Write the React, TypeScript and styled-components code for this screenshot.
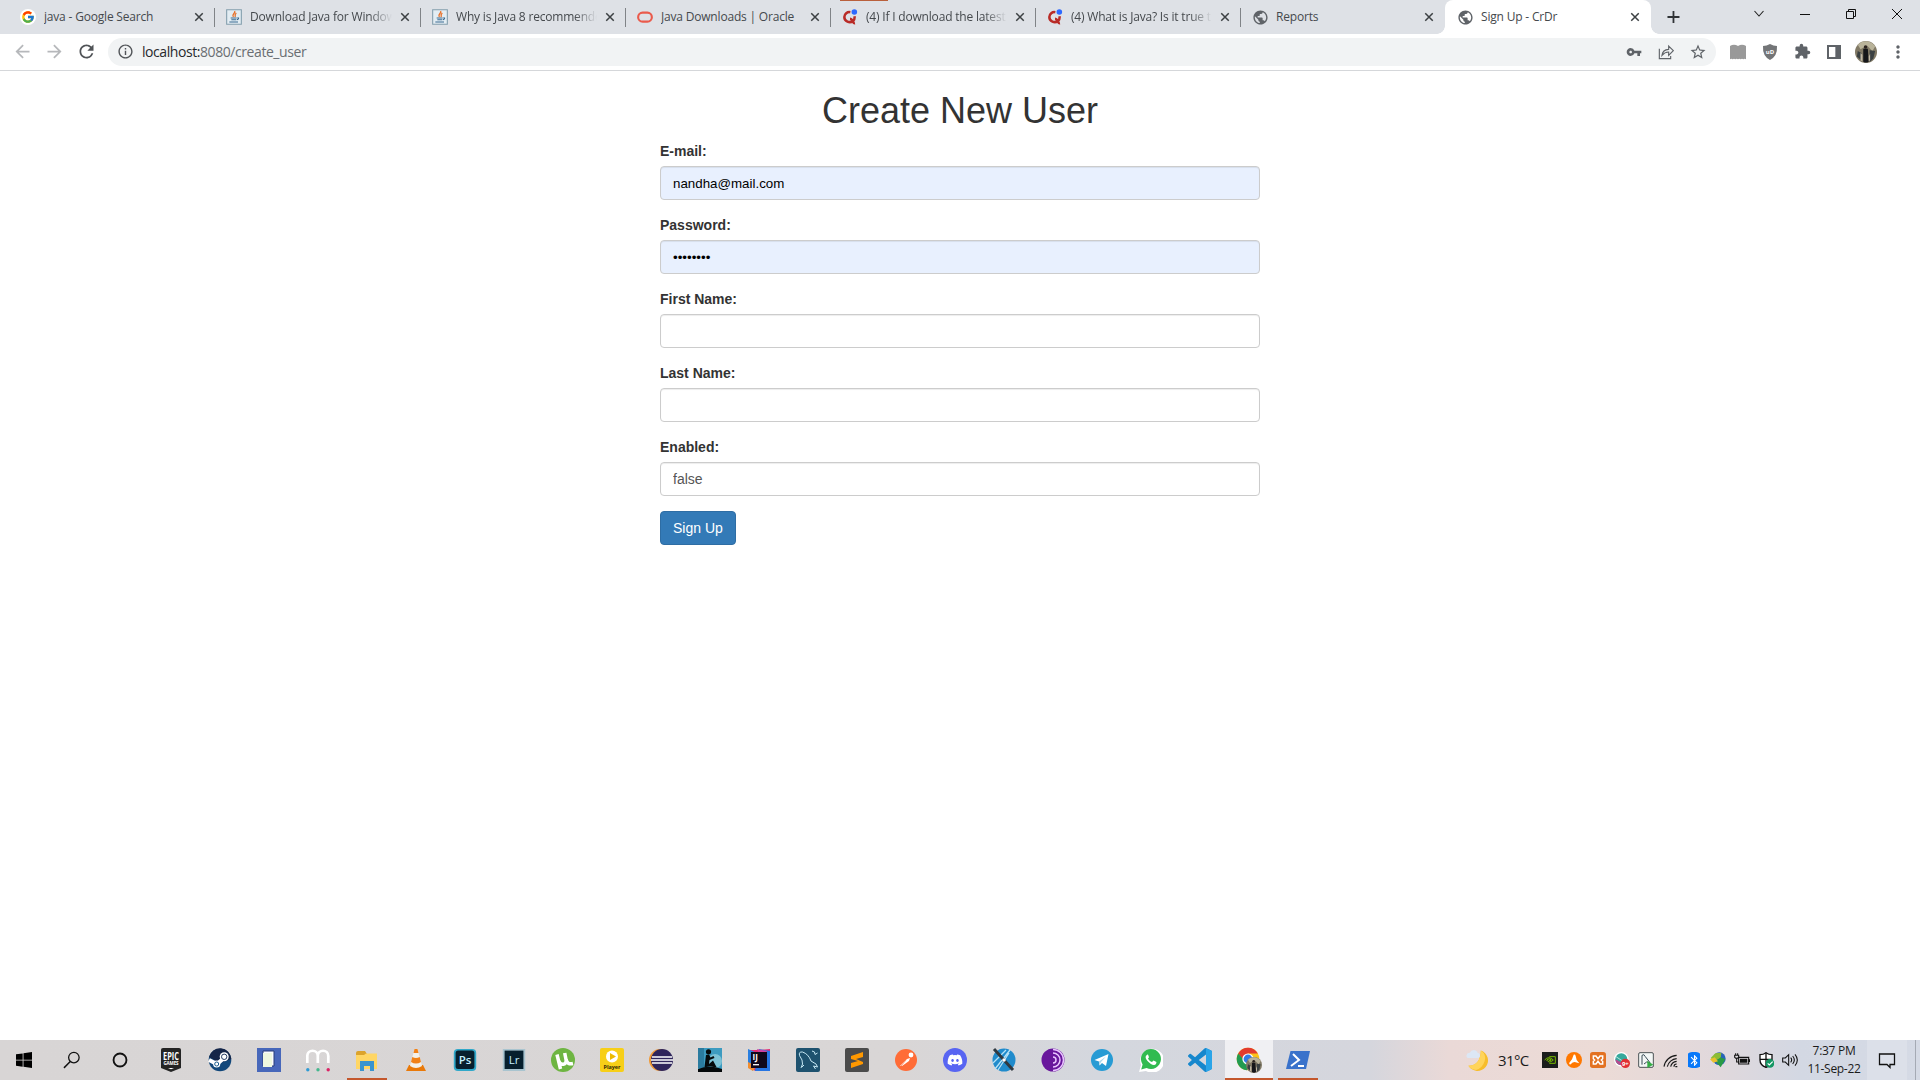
import React from 'react';
import styled, { createGlobalStyle } from 'styled-components';
import { MdPublic, MdVpnKey, MdStarBorder, MdExtension, MdRefresh, MdArrowBack, MdArrowForward, MdOutlineInfo, MdBluetooth, MdMoreVert } from 'react-icons/md';
import { FcGoogle } from 'react-icons/fc';
import { FaDiscord, FaWhatsapp } from 'react-icons/fa';

const Global = createGlobalStyle`
  *{box-sizing:border-box}
  body{margin:0;background:#fff;overflow:hidden;font-family:"Liberation Sans",sans-serif}
  svg{display:block;flex:none}
  svg text{font-family:"Open Sans",sans-serif}
`;
const Screen = styled.div`
  width:1920px;height:1080px;display:flex;flex-direction:column;background:#fff;
`;
const TabStrip = styled.div`
  height:34px;background:#dee1e6;display:flex;align-items:stretch;padding-left:10px;position:relative;
`;
const LoadingMark = styled.div`
  position:absolute;left:840px;top:0;width:48px;height:1px;background:#b9603c;
`;
const Tab = styled.div<{ $w: number; $active?: boolean; $divider?: boolean; $pad?: number }>`
  width:${p => p.$w}px;display:flex;align-items:center;padding:0 11px 0 ${p => p.$pad ?? 11}px;gap:8px;position:relative;
  background:${p => (p.$active ? '#fff' : 'transparent')};
  border-radius:${p => (p.$active ? '8px 8px 0 0' : '0')};
  &::after{content:"";position:absolute;right:0;top:8px;width:1px;height:19px;background:${p => (p.$divider ? '#808387' : 'transparent')}}
  ${p => p.$active && `
    &::before,&::after{content:"";position:absolute;top:auto;bottom:0;width:8px;height:8px}
    &::before{left:-8px;background:radial-gradient(circle at 0 0,transparent 7.5px,#fff 8px)}
    &::after{right:-8px;background:radial-gradient(circle at 100% 0,transparent 7.5px,#fff 8px)}
  `}
`;
const TabIcon = styled.span`
  width:16px;height:16px;display:grid;place-items:center;flex:none;color:#5f6368;
`;
const GoogleDisc = styled.span`
  width:16px;height:16px;border-radius:50%;background:#fff;display:grid;place-items:center;
`;
const TabTitle = styled.span<{ $fade?: boolean }>`
  flex:1;min-width:0;overflow:hidden;white-space:nowrap;font:12px/18px "Open Sans",sans-serif;color:#45494d;
  letter-spacing:-.19px;
  ${p => p.$fade && 'mask-image:linear-gradient(90deg,#000 84%,transparent 100%);'}
`;
const NewTab = styled.div`
  width:46px;display:grid;place-items:center;
`;
const WindowButtons = styled.div`
  display:flex;margin-left:auto;width:184px;height:28px;align-items:center;
  & > div{width:46px;display:grid;place-items:center}
`;
const Toolbar = styled.div`
  height:37px;border-bottom:1px solid #d5d7da;display:flex;align-items:center;padding:0 6px 1px;
`;
const IconRow = styled.div<{ $color?: string }>`
  display:flex;flex:none;color:${p => p.$color ?? '#5f6368'};
`;
const IconCell = styled.div<{ $color?: string }>`
  width:32px;height:28px;display:grid;place-items:center;color:${p => p.$color ?? 'inherit'};
`;
const Address = styled.div`
  flex:none;width:1608px;height:28px;border-radius:14px;background:#f1f3f4;display:flex;align-items:center;margin:0 6px;
  padding:0 2px 0 9px;color:#515458;
`;
const Url = styled.span`
  flex:1;margin-left:8px;font:14px/20px "Open Sans",sans-serif;color:#6a6e72;letter-spacing:-.43px;
  b{font-weight:400;color:#27292c}
`;
const Page = styled.main`
  flex:1;display:flex;flex-direction:column;align-items:center;
`;
const Form = styled.form`
  width:600px;display:flex;flex-direction:column;
`;
const Title = styled.h1`
  margin:20px 0 11px;text-align:center;font-size:36px;line-height:39px;color:#333;font-weight:400;
`;
const Group = styled.div`
  display:flex;flex-direction:column;margin-bottom:15px;
`;
const Label = styled.label`
  font-size:14px;line-height:20px;font-weight:700;color:#333;margin-bottom:5px;
`;
const Input = styled.input<{ $filled?: boolean }>`
  height:34px;border:1px solid #ccc;border-radius:4px;padding:6px 12px;outline:none;
  font:${p => (p.$filled ? '13.333px' : '14px')}/20px "Liberation Sans",sans-serif;
  color:${p => (p.$filled ? '#000' : '#555')};background:${p => (p.$filled ? '#e8f0fe' : '#fff')};
  box-shadow:inset 0 1px 1px rgba(0,0,0,.075);
`;
const Submit = styled.button`
  align-self:flex-start;height:34px;padding:6px 12px;border:1px solid #2e6da4;border-radius:4px;background:#337ab7;color:#fff;
  font:14px/20px "Liberation Sans",sans-serif;
`;
const Taskbar = styled.footer`
  height:40px;display:flex;align-items:stretch;
  background:linear-gradient(90deg,#d8d5d5 0,#d9d6d6 900px,#d4d7de 1100px,#d5d6dd 1370px,#ead9d7 1450px,#ecdbd6 1600px,#e0d8dc 1720px,#d3d8e3 1800px,#d5dae5 1920px);
`;
const SystemItem = styled.div`
  width:48px;display:grid;place-items:center;
`;
const Apps = styled.div`
  display:flex;gap:1px;margin-left:3px;
`;
const AppCell = styled.div<{ $open?: boolean; $active?: boolean }>`
  width:48px;display:grid;place-items:center;position:relative;background:${p => (p.$active ? '#f0f0f3' : 'transparent')};
  &::after{content:"";position:absolute;bottom:0;height:2px;left:${p => (p.$active ? 0 : 4)}px;right:${p => (p.$active ? 0 : 4)}px;
    background:${p => (p.$open || p.$active ? '#c4572c' : 'transparent')}}
`;
const Disc = styled.span<{ $bg: string }>`
  width:24px;height:24px;border-radius:50%;background:${p => p.$bg};display:grid;place-items:center;color:#fff;
`;
const Tray = styled.div`
  display:flex;align-items:center;margin-left:auto;font:15px/20px "Open Sans",sans-serif;color:#1b1b1b;
`;
const Weather = styled.div`
  display:flex;align-items:center;gap:9px;width:76px;letter-spacing:-.6px;white-space:nowrap;
`;
const TrayIcons = styled.div`
  display:flex;gap:8px;width:256px;
`;
const BluetoothBadge = styled.span`
  width:16px;height:16px;display:grid;place-items:center;color:#fff;
  background:linear-gradient(#0878f9,#0878f9) center/12px 16px no-repeat;border-radius:6px;
`;
const Clock = styled.div`
  width:66px;margin-left:3px;font-size:12px;line-height:18px;text-align:center;letter-spacing:-.3px;white-space:nowrap;
`;
const Notifications = styled.div`
  width:40px;height:40px;display:grid;place-items:center;background:#dce0e9;
`;
const ShowDesktop = styled.div`
  width:5px;height:40px;margin-left:8px;border-left:1px solid #a5aab4;
`;

type ArtProps = { s?: number; children: React.ReactNode };
const Art = ({ s = 24, children }: ArtProps) => <svg width={s} height={s} viewBox="0 0 24 24" fill="none">{children}</svg>;

const Google = () => <GoogleDisc><FcGoogle size={14} /></GoogleDisc>;
const Java = () => (
  <Art s={16}><path d="M1 1h22v22H1z" fill="#e3edf3" stroke="#829dac" strokeWidth="1.6" /><path d="M13 3c2 4-5 4-2 9M15.5 6c-3 2-2 4-1.5 6" stroke="#e76f28" strokeWidth="2" /><path d="M7 13.5h9M8 16.2h7M5 19.5h13M17 13c4 0 1 3-1 3" stroke="#3b6b92" strokeWidth="1.6" /></Art>
);
const Oracle = () => <Art s={16}><rect x="1.7" y="5.5" width="20.6" height="13.5" rx="6.7" stroke="#ea5b4c" strokeWidth="3.2" /></Art>;
const Quora = () => <Art s={16}><path d="M12.5 4.8A7.6 7.6 0 0 0 3.5 12c0 7 8 9.500 13 6.200 2-1.500 2.600-4 2.600-7.200M12 14.500c4.500 0 3.500 7.500 7.500 6.700" stroke="#b92b27" strokeWidth="3.800" /><circle cx="18.5" cy="4.5" r="4.2" fill="#2e69ff" /></Art>;
const Globe = () => <MdPublic size={17} />;
const Close = () => <Art s={10}><path d="m3 3 18 18M21 3 3 21" stroke="#3c4043" strokeWidth="3.6" /></Art>;

const tabs = [
  { w: 205, pad: 10, icon: <Google />, title: 'java - Google Search', divider: true },
  { w: 206, icon: <Java />, title: 'Download Java for Window', divider: true, fade: true },
  { w: 205, icon: <Java />, title: 'Why is Java 8 recommende', divider: true, fade: true },
  { w: 205, icon: <Oracle />, title: 'Java Downloads | Oracle', divider: true },
  { w: 205, icon: <Quora />, title: '(4) If I download the latest', divider: true, fade: true },
  { w: 205, icon: <Quora />, title: '(4) What is Java? Is it true t', divider: true, fade: true },
  { w: 204, icon: <Globe />, title: 'Reports' },
  { w: 206, pad: 12, icon: <Globe />, title: 'Sign Up - CrDr', active: true },
];

const Start = () => <Art s={16}><path d="m0 3.5 10-1.4v9.4H0zM11.2 2 24 0v11.5H11.2zM0 12.7h10v9.4L0 20.6zM11.2 12.7H24V24l-12.8-1.9z" fill="#000" /></Art>;
const Search = () => <Art s={18}><circle cx="14.5" cy="8.8" r="7" stroke="#111" strokeWidth="1.7" /><path d="m9.7 14-8.4 8.5" stroke="#111" strokeWidth="1.9" /></Art>;
const Cortana = () => <Art s={16}><circle cx="12" cy="12" r="9.7" stroke="#111" strokeWidth="2.8" /></Art>;
const Epic = () => <Art><path d="M2 1.5Q2 0 4 0h16q2 0 2 2v18l-10 4-10-4z" fill="#242424" /><text x="12" y="11.5" textAnchor="middle" fontSize="10" fontWeight="700" fill="#fff" textLength="16" lengthAdjust="spacingAndGlyphs">EPIC</text><text x="12" y="17" textAnchor="middle" fontSize="4.5" fontWeight="700" fill="#fff" textLength="15">GAMES</text><path d="m9 20 3 1.3 3-1.3z" fill="#fff" /></Art>;
const Steam = () => <Art><circle cx="12" cy="12" r="11.3" fill="#12477a" /><path d="M1 9A11.3 11.3 0 0 1 23.3 11L12 15z" fill="#152548" /><path d="m1 12 8 4 7-6" stroke="#fff" strokeWidth="4" /><circle cx="16.2" cy="8.8" r="4.5" fill="#fff" /><circle cx="16.2" cy="8.8" r="2.7" stroke="#263b62" strokeWidth="1" /><circle cx="8.7" cy="16" r="3.6" fill="#fff" /><circle cx="8.7" cy="16" r="2" stroke="#17598b" /></Art>;
const Notebook = () => <Art><path d="M0 0h24v24H0z" fill="#4767ba" /><path d="M6 3h11v15H6z" fill="#f8fbff" stroke="#263d78" /><path d="M6 5h9v14H6z" fill="#eef8df" /></Art>;
const Meem = () => <Art><path d="M1.3 15V8a5.2 5.2 0 0 1 10.5 0v7M11.8 8a5.2 5.2 0 0 1 10.5 0v7" stroke="#fff" strokeWidth="2.7" /><circle cx="1.8" cy="21.8" r="1.7" fill="#2e9bd4" /><circle cx="12" cy="21.8" r="1.7" fill="#45b78e" /><circle cx="22.2" cy="21.8" r="1.7" fill="#dc2365" /></Art>;
const Folder = () => <Art><path d="M1 5q0-2 2-2h7l2 3h10v15H1z" fill="#dca32c" /><path d="M1 7h8l2-1.500h11v15.500H1z" fill="#ffd665" /><path d="M5 13h14v10h-4v-5H9v5H5z" fill="#3a94cf" /></Art>;
const Vlc = () => <Art><path d="m5 17-3 6h20l-3-6z" fill="#e97909" /><path d="M10.500 1 6 18q6 4 12 0L13.500 1z" fill="#f4f1e9" /><path d="m10.500 1-1 4h5l-1-4zM8.300 9l-1.300 5q5 3 10 0l-1.300-5q-3.700 2-7.400 0" fill="#f18117" /></Art>;
const Adobe = ({ name, old }: { name: string; old?: boolean }) => <Art><rect x=".8" y="1" width="22.4" height="22" rx={old ? 0 : 4} fill={old ? '#a9c4cf' : '#31a8c9'} /><rect x="2.6" y="2.6" width="18.8" height="18.4" rx={old ? 0 : 2.5} fill="#071f2d" /><text x="12" y="16" textAnchor="middle" fontSize="11.5" fontWeight={old ? 400 : 600} fill="#c5f0ff">{name}</text></Art>;
const Torrent = () => <Art><circle cx="12" cy="12" r="12" fill="#6eb542" /><path d="M6 6.500 9.500 21M7.800 13c1.500 5 8.500 4 7.200-1.500L13.700 5M15 11.500c.8 3.500 3 5 7 4" stroke="#fff" strokeWidth="3.500" /></Art>;
const Player = () => <Art><rect width="24" height="24" rx="2" fill="#f7cf18" /><circle cx="12" cy="8.5" r="6" fill="#fff" /><path d="m10 5 6 3.5-6 3.5z" fill="#edba00" /><text x="12" y="21" textAnchor="middle" fontSize="6" fontWeight="700" fill="#342c08" textLength="17" lengthAdjust="spacingAndGlyphs">Player</text></Art>;
const Eclipse = () => <Art><circle cx="11" cy="12" r="11" fill="#f19a36" /><circle cx="13" cy="12" r="11" fill="#2f255b" /><path d="M3 9h20M2 12h22M3 15h20" stroke="#fff" strokeWidth="1.5" /></Art>;
const Kindle = () => <Art><path d="M0 0h24v24H0z" fill="#3d9bc0" /><path d="M0 0h6v20H0z" fill="#2b7b9f" /><circle cx="17" cy="13" r="7" fill="#a9dce5" opacity=".6" /><circle cx="10.500" cy="3.800" r="2.6" fill="#05090b" /><path d="M8 7 6.500 19h12L15 12.500l-4 3.500.5-4 5-2-1-2-3 1.500L11 6.500zM0 21q12-5 24 0v3H0z" fill="#05090b" /></Art>;
const Idea = () => <Art><path d="m1 2 11 0 11-1v22H8L1 16z" fill="#e22e75" /><path d="m1 1 9 4-4 18L1 16z" fill="#2a7fe0" /><path d="m1 14 8 4-3 5-5-3z" fill="#f38d2d" /><path d="m12 1 11 2v20L8 23z" fill="#2675e3" /><path d="m10 1 10 2-6 8z" fill="#d33fa0" /><path d="M4 4h16v16H4z" fill="#10081a" /><text x="5.6" y="12" fontSize="8" fontWeight="700" fill="#fff">IJ</text><path d="M6 16.7h6" stroke="#fff" strokeWidth="1.3" /></Art>;
const Sql = () => <Art><rect width="24" height="24" rx="2" fill="#1e526f" /><path d="M5 20 6.500 16 6 12 3.500 7.500q-1-4 3-3.500 6 2 8.500 9l5 3 1.500 3-4-1 2 3M6 19l2-2M16 3l2.500 1 .5 2.500L21.500 5" stroke="#c6e8f4" strokeWidth="1" /></Art>;
const Sublime = () => <Art><rect width="24" height="24" rx="2" fill="#4b4b4b" /><path d="m6 8 12-4v5l-7 2 7 3v2L6 20v-5l7-2-7-2z" fill="#ff9800" /></Art>;
const Postman = () => <Art><circle cx="12" cy="12" r="11" fill="#ff6c37" /><path d="m6 18 7-7 3-1-1 3-7 5z" fill="#fff" /><circle cx="17" cy="7" r="2.4" fill="#fff" /><path d="m12 12-5 6" stroke="#ff9a76" /></Art>;
const Discord = () => <Disc $bg="#5865f2"><FaDiscord size={16} /></Disc>;
const Scope = () => <Art><circle cx="12" cy="12" r="11.5" fill="#208bcc" /><path d="m1 15 13-13M3 21 18 2M6 22 17 5" stroke="#b7e2f6" strokeWidth="1.3" /><path d="m2 1 19 21" stroke="#303941" strokeWidth="3" /><circle cx="12" cy="12" r="1.8" fill="#fff" /></Art>;
const Tor = () => <Art><circle cx="12" cy="12" r="11.5" fill="#68169c" /><path d="M12 5a7 7 0 0 1 0 14M12 1.5a10.5 10.5 0 0 1 0 21M12 9a3 3 0 0 1 0 6" stroke="#e9c4ff" strokeWidth="1.5" /></Art>;
const Telegram = () => <Art><circle cx="12" cy="12" r="11" fill="#279bd4" /><path d="m4.5 12 14-6-2.5 12-4-3-2.5 2.5-.5-4z" fill="#fff" /><path d="m9 13.5 7-5-5 5.5-1.5 3z" fill="#aad5ea" /></Art>;
const WhatsApp = () => <Art><path d="m0 24 2-7A12 12 0 1 1 7 23z" fill="#fff" /><path d="m2.2 21.5 1.4-5A10 10 0 1 1 7.6 20z" fill="#31bb50" /><path d="M8.500 6.500c-3 1.500-2 4.500.5 7s6 5 8 2.500l.5-2-3-1.400-1.500 1.500c-2-.5-3-2-4-3.600l1-1.300-1-2.700z" fill="#fff" /></Art>;
const Code = () => <Art><path d="M23.15 2.587L18.21.21a1.494 1.494 0 0 0-1.705.29l-9.46 8.63-4.12-3.128a.999.999 0 0 0-1.276.057L.327 7.261A1 1 0 0 0 .326 8.74L3.899 12 .326 15.26a1 1 0 0 0 .001 1.479L1.65 17.94a.999.999 0 0 0 1.276.057l4.12-3.128 9.46 8.63a1.492 1.492 0 0 0 1.704.29l4.942-2.377A1.5 1.5 0 0 0 24 20.06V3.939a1.5 1.5 0 0 0-.85-1.352zm-5.146 14.861L10.826 12l7.178-5.448v10.896z" fill="#1687cd" /><path d="m18 .1 5.150 2.487A1.500 1.500 0 0 1 24 3.939V20.060q0 1-.85 1.350L18 23.900z" fill="#2aa4e8" /></Art>;
const Avatar = ({ s = 22 }: { s?: number }) => <Art s={s}><circle cx="12" cy="12" r="12" fill="#817965" /><path d="M3 4A12 12 0 0 1 22 6l-3 5-6-6-7 4z" fill="#b9b39a" /><circle cx="11.500" cy="6.500" r="1.900" fill="#2a221f" /><path d="M9 8.500h5l1 14q-3 2-6 0z" fill="#151619" /><path d="m16 10 6 1-2 8-4 4zM3 11l4 2v8l-5-4z" fill="#3b4142" /><path d="m6 13 2 2v7l-2-1zm9 4 1.500-3v7L15 22z" fill="#c2b9a6" /></Art>;
const Chrome = () => (
  <svg width="26" height="26" viewBox="0 0 26 26"><circle cx="12" cy="12" r="11.3" fill="#fbc318" /><path d="M2.2 6.4A11.3 11.3 0 0 1 21.8 6.4H12L8 14z" fill="#e33b2e" /><path d="M2.2 6.4A11.3 11.3 0 0 0 11 23.3l6-8-8-1z" fill="#229b50" /><circle cx="12" cy="12" r="5.6" fill="#fff" /><circle cx="12" cy="12" r="4.4" fill="#337be5" /><g transform="translate(10 10)"><Avatar s={16} /></g></svg>
);
const Powershell = () => <Art><path d="M4.5 3H24l-4 18H0z" fill="#3972cb" /><path d="m7 6 6 6-8 6m7 0h6" stroke="#fff" strokeWidth="2" /></Art>;

const apps = [Epic, Steam, Notebook, Meem, Folder, Vlc, () => <Adobe name="Ps" />, () => <Adobe name="Lr" old />, Torrent, Player, Eclipse, Kindle, Idea, Sql, Sublime, Postman, Discord, Scope, Tor, Telegram, WhatsApp, Code, Chrome, Powershell];

const trayStart = [
  <><path d="M0 0h24v24H0z" fill="#1b1d1c" /><path d="M4 12q6-7 13 0-6 6-10 0 4-4 7 0-2 2-4 0M11 7h9v10h-9" stroke="#76b900" strokeWidth="1.5" /></>,
  <><circle cx="12" cy="12" r="12" fill="#ff7800" /><path d="M11.500 4q2.500-.5 3 2l1.500 6 4 5-7-2q-3 0-6 3.500-3 .5-2-2.500l4-5z" fill="#fff" /></>,
  <><rect width="24" height="24" rx="4" fill="#e37222" /><path d="M5 6h4l3 4 3-4h4v4l-2 2 2 2v4h-4l-3-4-3 4H5v-4l2-2-2-2z" stroke="#fff" strokeWidth="2.2" /></>,
  <><circle cx="11" cy="11" r="11" fill="#fff" /><circle cx="11" cy="11" r="9" fill="#36a99c" /><path d="M2 11a9 9 0 0 0 14 7z" fill="#b74a8f" /><path d="M3 7 15 15l5-4" stroke="#fff" /><circle cx="17" cy="17" r="7" fill="#e13035" /><text x="17" y="20.500" fontSize="9" fontWeight="700" textAnchor="middle" fill="#fff">9+</text></>,
  <><rect x="1" y="1" width="22" height="22" rx="2" fill="#f3f7f6" stroke="#4c5356" strokeWidth="1.5" /><path d="M6 19V5q3-3 5 2l7 9-5-1-4 3" stroke="#384b55" strokeWidth="1.5" /><path d="m14 13 9 6-9 5z" fill="#35ad45" /></>,
  <path d="M3 22A20 20 0 0 1 22 5M8 22A15 15 0 0 1 22 10M13 22a10 10 0 0 1 9-8M18 22q0-4 4-4M20 22h3" stroke="#191919" strokeWidth="1.7" />,
];
const trayEnd = [
  <><circle cx="14" cy="10" r="9.500" fill="#2864b8" /><path d="m8 2 9-1-1 9-10 3-5-4z" fill="#8dbd35" /><path d="m16 8 7 3-7 12-8-9z" fill="#299a45" /><path d="m0 11 7-3 5 6-7 2z" fill="#e9bf2e" /></>,
  <><path d="M7 8h15v10H7z" stroke="#111" strokeWidth="1.7" /><path d="M9 10h11v6H9zM22 11h2v4h-2z" fill="#111" /><path d="M1 5h6v3q-3 3-6 0zM4 10v5h4M2.500 2v3m3-3v3" stroke="#111" strokeWidth="1.6" /></>,
  <><path d="M12 1q4 3 9 3v8q0 8-9 11-9-3-9-11V4q5 0 9-3z" fill="#fff" stroke="#111" strokeWidth="2" /><path d="M12 1v22M3 11h18" stroke="#111" strokeWidth="2" /><circle cx="18" cy="17" r="6.500" fill="#139763" /><path d="m14.5 17 2.5 2.5 5-5" stroke="#fff" strokeWidth="1.7" /></>,
  <path d="M1 9h4l5-5v16l-5-5H1zM13 8.500q3 3.500 0 7M16 6q5 6 0 12M19.500 3.500q7 8.500 0 17" stroke="#111" strokeWidth="1.6" />,
];

export default function App() {
  return (
    <Screen>
      <Global />
      <TabStrip>
        <LoadingMark />
        {tabs.map((t, i) => (
          <Tab key={i} $w={t.w} $pad={t.pad} $active={t.active} $divider={t.divider}>
            <TabIcon>{t.icon}</TabIcon><TabTitle $fade={t.fade}>{t.title}</TabTitle><Close />
          </Tab>
        ))}
        <NewTab><Art s={18}><path d="M11.300 4v16M3.300 12h16" stroke="#303336" strokeWidth="2.4" /></Art></NewTab>
        <WindowButtons>
          <div><Art s={12}><path d="m3 6 9 10 9-10" stroke="#222" strokeWidth="2.2" /></Art></div>
          <div><Art s={12}><path d="M2 13h20" stroke="#111" strokeWidth="2" /></Art></div>
          <div><Art s={12}><path d="M3 7h14v14H3zM7 7V3h14v14h-4" stroke="#111" strokeWidth="2" /></Art></div>
          <div><Art s={12}><path d="m2 2 20 20M22 2 2 22" stroke="#111" strokeWidth="2" /></Art></div>
        </WindowButtons>
      </TabStrip>
      <Toolbar>
        <IconRow>
          <IconCell $color="#b6b8bb"><MdArrowBack size={21} /></IconCell>
          <IconCell $color="#b6b8bb"><MdArrowForward size={21} /></IconCell>
          <IconCell $color="#505357"><MdRefresh size={21} /></IconCell>
        </IconRow>
        <Address>
          <MdOutlineInfo size={17} />
          <Url><b>localhost:</b>8080/create_user</Url>
          <IconRow>
            <IconCell><MdVpnKey size={16} /></IconCell>
            <IconCell><Art s={16}><path d="M2 7v15h17v-4M6 17q1-8.500 10-9V3l7 7-7 7v-5q-6 0-10 5z" stroke="#5f6368" strokeWidth="1.7" /></Art></IconCell>
            <IconCell><MdStarBorder size={18} /></IconCell>
          </IconRow>
        </Address>
        <IconRow>
          <IconCell><Art s={16}><path d="M0 3q6-4 12 0 6-4 12 0v20q-2-2-4 0-2-2-4 0-2-2-4 0-2-2-4 0-2-2-4 0-2-2-4 0z" fill="#999" /></Art></IconCell>
          <IconCell><Art s={16}><path d="M12 0q5 3 10.500 3 1 15-10.500 21Q.5 18 1.500 3 7 3 12 0" fill="#737577" /><text x="12" y="14.500" textAnchor="middle" fontSize="9" fontWeight="700" fill="#fff">uD</text></Art></IconCell>
          <IconCell><MdExtension size={17} /></IconCell>
          <IconCell><Art s={16}><path d="M3 3h18v18H3z" stroke="#5f6368" strokeWidth="3" /><path d="M14 3h8v18h-8z" fill="#5f6368" /></Art></IconCell>
          <IconCell><Avatar /></IconCell>
          <IconCell><MdMoreVert size={20} /></IconCell>
        </IconRow>
      </Toolbar>
      <Page>
        <Form>
          <Title>Create New User</Title>
          <Group><Label>E-mail:</Label><Input $filled defaultValue="nandha@mail.com" /></Group>
          <Group><Label>Password:</Label><Input $filled type="password" defaultValue="password" /></Group>
          <Group><Label>First Name:</Label><Input /></Group>
          <Group><Label>Last Name:</Label><Input /></Group>
          <Group><Label>Enabled:</Label><Input defaultValue="false" /></Group>
          <Submit type="button">Sign Up</Submit>
        </Form>
      </Page>
      <Taskbar>
        <SystemItem><Start /></SystemItem><SystemItem><Search /></SystemItem><SystemItem><Cortana /></SystemItem>
        <Apps>{apps.map((Icon, i) => <AppCell key={i} $open={i === 4 || i === 23} $active={i === 22}><Icon /></AppCell>)}</Apps>
        <Tray>
          <Weather>
            <Art s={23}><path d="M15.500 1.500a11 11 0 1 1-13 16Q15 17 15.500 1.500" fill="#f7bd2b" /><path d="M15.500 1.500q6 4 4 11t-9 9.500q-5-.5-8-4.500Q15 17 15.500 1.500" fill="#ffd45a" /><path d="M3.500 9.500Q0 9.500.5 6.500 1 4 4 4q2-4 6-2.500 2 1 2 2.500 3 1 2.500 3.500-.5 2-3 2z" fill="#dce7f5" /></Art>
            <span>31°C</span>
          </Weather>
          <TrayIcons>
            {trayStart.map((icon, i) => <Art key={i} s={16}>{icon}</Art>)}
            <BluetoothBadge><MdBluetooth size={13} /></BluetoothBadge>
            {trayEnd.map((icon, i) => <Art key={i} s={16}>{icon}</Art>)}
          </TrayIcons>
          <Clock>7:37 PM<br />11-Sep-22</Clock>
          <Notifications><Art s={18}><path d="M2 4h20v14h-6v4l-4-4H2z" stroke="#111" strokeWidth="1.7" /></Art></Notifications>
          <ShowDesktop />
        </Tray>
      </Taskbar>
    </Screen>
  );
}
